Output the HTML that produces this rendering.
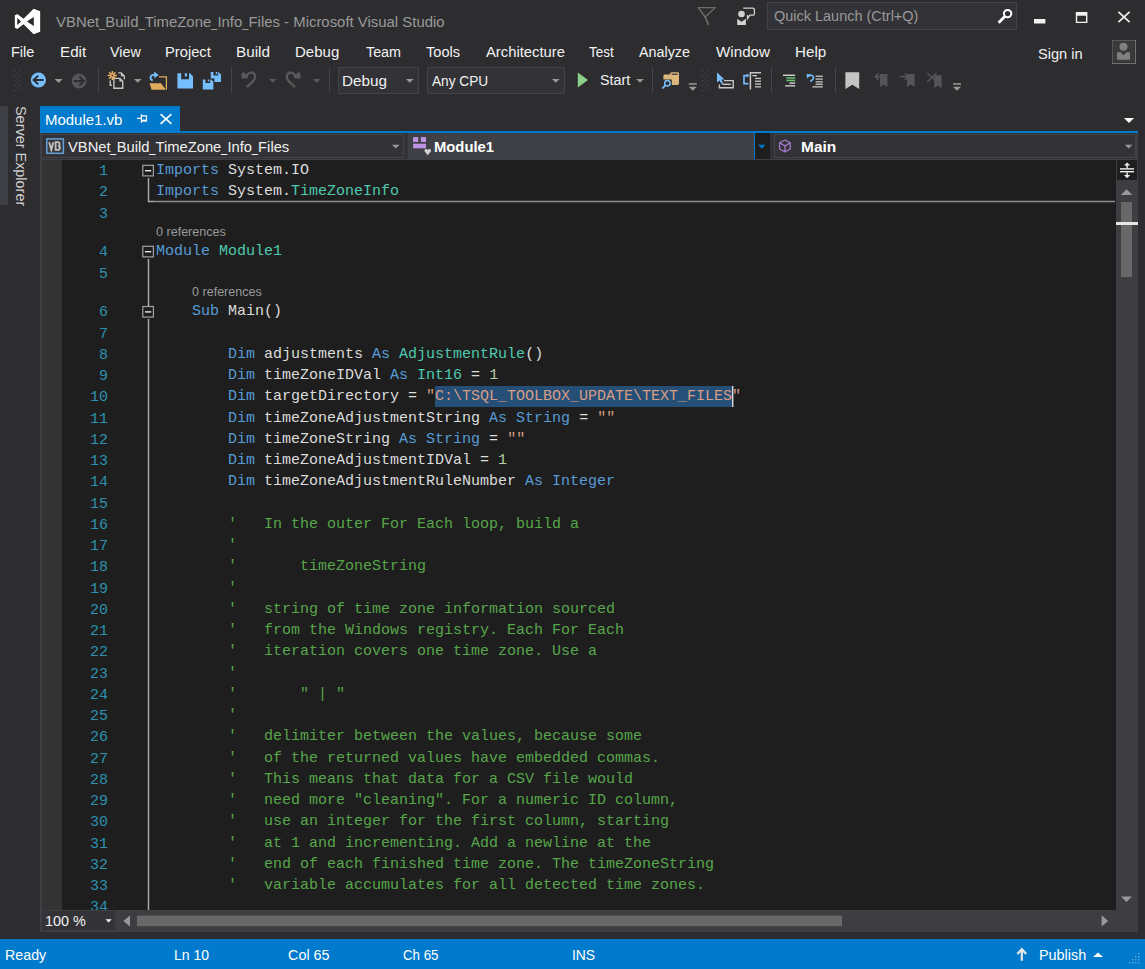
<!DOCTYPE html>
<html><head><meta charset="utf-8"><title>VBNet_Build_TimeZone_Info_Files - Microsoft Visual Studio</title>
<style>
html,body{margin:0;padding:0;background:#2d2d30;}
body{width:1145px;height:969px;position:relative;overflow:hidden;font-family:"Liberation Sans",sans-serif;}
.t{position:absolute;white-space:pre;line-height:20px;height:20px;transform-origin:0 50%;font-family:"Liberation Sans",sans-serif;}
.c{position:absolute;white-space:pre;line-height:20px;height:20px;font-family:"Liberation Mono",monospace;font-size:15px;color:#dcdcdc;left:156px;}
.n{position:absolute;white-space:pre;line-height:20px;height:20px;font-family:"Liberation Mono",monospace;font-size:15px;color:#2b91af;text-align:right;width:40px;left:68px;}
.b{position:absolute;}
.u{display:inline-block;width:0.415em;transform:scaleX(0.746);transform-origin:0 50%;}
svg{position:absolute;left:0;top:0;}
</style></head><body>
<!-- chrome boxes -->
<div class="b" style="left:0;top:106px;width:8px;height:99px;background:#3f3f46;"></div>
<div class="b" style="left:767px;top:2px;width:248px;height:26px;background:#333337;border:1px solid #434346;"></div>
<div class="b" style="left:338px;top:67px;width:79px;height:25px;background:#333337;border:1px solid #434346;"></div>
<div class="b" style="left:427px;top:67px;width:136px;height:25px;background:#333337;border:1px solid #434346;"></div>
<div class="b" style="left:1112px;top:40px;width:21.5px;height:21.5px;border:1px solid #747474;"></div>
<!-- document well -->
<div class="b" style="left:40px;top:106px;width:140px;height:26px;background:#007acc;"></div>
<div class="b" style="left:40px;top:131px;width:1098px;height:2px;background:#007acc;"></div>
<div class="b" style="left:40px;top:133px;width:1098px;height:799px;background:#3f3f46;"></div>
<div class="b" style="left:42px;top:133px;width:1094px;height:26px;background:#333337;"></div>
<div class="b" style="left:42px;top:134px;width:362px;height:24px;background:#333337;border:1px solid #434346;border-left:0;box-sizing:border-box;"></div>
<div class="b" style="left:408px;top:133px;width:346px;height:26px;background:#3f3f46;"></div>
<div class="b" style="left:754px;top:133px;width:16px;height:26px;background:#1e1e1e;border-left:1px solid #007acc;box-sizing:border-box;"></div>
<div class="b" style="left:774px;top:134px;width:362px;height:24px;background:#333337;border:1px solid #434346;box-sizing:border-box;"></div>
<div class="b" style="left:42px;top:160px;width:20px;height:750px;background:#333333;"></div>
<div class="b" style="left:62px;top:160px;width:1054px;height:750px;background:#1e1e1e;"></div>
<div class="b" style="left:1116px;top:160px;width:22px;height:750px;background:#3e3e42;"></div>
<div class="b" style="left:41px;top:910px;width:1097px;height:22px;background:#3e3e42;"></div>
<div class="b" style="left:42px;top:911px;width:73px;height:19px;background:#333337;border:0 solid #434346;"></div>
<div class="b" style="left:0;top:939px;width:1145px;height:30px;background:#007acc;"></div>
<div class="b" style="left:62px;top:160px;width:1054px;height:750px;overflow:hidden;">
<div class="b" style="left:-62px;top:-160px;width:1145px;height:969px;">
<div class="b" style="left:435px;top:386px;width:297px;height:21px;background:#264f78;"></div>
<div class="n" style="top:162px">1</div><div class="c" style="top:161px"><span style="color:#569cd6">Imports</span> System.IO</div>
<div class="n" style="top:183px">2</div><div class="c" style="top:182px"><span style="color:#569cd6">Imports</span> System.<span style="color:#4ec9b0">TimeZoneInfo</span></div>
<div class="n" style="top:205px">3</div>
<div class="n" style="top:243px">4</div><div class="c" style="top:242px"><span style="color:#569cd6">Module</span> <span style="color:#4ec9b0">Module1</span></div>
<div class="n" style="top:265px">5</div>
<div class="n" style="top:303px">6</div><div class="c" style="top:302px">    <span style="color:#569cd6">Sub</span> Main()</div>
<div class="n" style="top:325px">7</div>
<div class="n" style="top:346px">8</div><div class="c" style="top:345px">        <span style="color:#569cd6">Dim</span> adjustments <span style="color:#569cd6">As</span> <span style="color:#4ec9b0">AdjustmentRule</span>()</div>
<div class="n" style="top:367px">9</div><div class="c" style="top:366px">        <span style="color:#569cd6">Dim</span> timeZoneIDVal <span style="color:#569cd6">As</span> <span style="color:#4ec9b0">Int16</span> = <span style="color:#b5cea8">1</span></div>
<div class="n" style="top:388px">10</div><div class="c" style="top:387px">        <span style="color:#569cd6">Dim</span> targetDirectory = <span style="color:#d69d85">&quot;C:\TSQL_TOOLBOX_UPDATE\TEXT_FILES&quot;</span></div>
<div class="n" style="top:410px">11</div><div class="c" style="top:409px">        <span style="color:#569cd6">Dim</span> timeZoneAdjustmentString <span style="color:#569cd6">As</span> <span style="color:#569cd6">String</span> = <span style="color:#d69d85">&quot;&quot;</span></div>
<div class="n" style="top:431px">12</div><div class="c" style="top:430px">        <span style="color:#569cd6">Dim</span> timeZoneString <span style="color:#569cd6">As</span> <span style="color:#569cd6">String</span> = <span style="color:#d69d85">&quot;&quot;</span></div>
<div class="n" style="top:452px">13</div><div class="c" style="top:451px">        <span style="color:#569cd6">Dim</span> timeZoneAdjustmentIDVal = <span style="color:#b5cea8">1</span></div>
<div class="n" style="top:473px">14</div><div class="c" style="top:472px">        <span style="color:#569cd6">Dim</span> timeZoneAdjustmentRuleNumber <span style="color:#569cd6">As</span> <span style="color:#569cd6">Integer</span></div>
<div class="n" style="top:495px">15</div>
<div class="n" style="top:516px">16</div><div class="c" style="top:515px">        <span style="color:#57a64a">&#x27;   In the outer For Each loop, build a</span></div>
<div class="n" style="top:537px">17</div><div class="c" style="top:536px">        <span style="color:#57a64a">&#x27;</span></div>
<div class="n" style="top:558px">18</div><div class="c" style="top:557px">        <span style="color:#57a64a">&#x27;       timeZoneString</span></div>
<div class="n" style="top:580px">19</div><div class="c" style="top:579px">        <span style="color:#57a64a">&#x27;</span></div>
<div class="n" style="top:601px">20</div><div class="c" style="top:600px">        <span style="color:#57a64a">&#x27;   string of time zone information sourced</span></div>
<div class="n" style="top:622px">21</div><div class="c" style="top:621px">        <span style="color:#57a64a">&#x27;   from the Windows registry. Each For Each</span></div>
<div class="n" style="top:643px">22</div><div class="c" style="top:642px">        <span style="color:#57a64a">&#x27;   iteration covers one time zone. Use a</span></div>
<div class="n" style="top:665px">23</div><div class="c" style="top:664px">        <span style="color:#57a64a">&#x27;</span></div>
<div class="n" style="top:686px">24</div><div class="c" style="top:685px">        <span style="color:#57a64a">&#x27;       &quot; | &quot;</span></div>
<div class="n" style="top:707px">25</div><div class="c" style="top:706px">        <span style="color:#57a64a">&#x27;</span></div>
<div class="n" style="top:728px">26</div><div class="c" style="top:727px">        <span style="color:#57a64a">&#x27;   delimiter between the values, because some</span></div>
<div class="n" style="top:750px">27</div><div class="c" style="top:749px">        <span style="color:#57a64a">&#x27;   of the returned values have embedded commas.</span></div>
<div class="n" style="top:771px">28</div><div class="c" style="top:770px">        <span style="color:#57a64a">&#x27;   This means that data for a CSV file would</span></div>
<div class="n" style="top:792px">29</div><div class="c" style="top:791px">        <span style="color:#57a64a">&#x27;   need more &quot;cleaning&quot;. For a numeric ID column,</span></div>
<div class="n" style="top:813px">30</div><div class="c" style="top:812px">        <span style="color:#57a64a">&#x27;   use an integer for the first column, starting</span></div>
<div class="n" style="top:835px">31</div><div class="c" style="top:834px">        <span style="color:#57a64a">&#x27;   at 1 and incrementing. Add a newline at the</span></div>
<div class="n" style="top:856px">32</div><div class="c" style="top:855px">        <span style="color:#57a64a">&#x27;   end of each finished time zone. The timeZoneString</span></div>
<div class="n" style="top:877px">33</div><div class="c" style="top:876px">        <span style="color:#57a64a">&#x27;   variable accumulates for all detected time zones.</span></div>
<div class="n" style="top:898px">34</div>
</div></div>
<div class="t" style="left:55.56px;top:11.70px;font-size:15.3px;color:#999999;font-weight:400;transform:scaleX(0.9749)">VBNet<span class="u">_</span>Build<span class="u">_</span>TimeZone<span class="u">_</span>Info<span class="u">_</span>Files - Microsoft Visual Studio</div>
<div class="t" style="left:774.06px;top:6.40px;font-size:15px;color:#999999;font-weight:400;transform:scaleX(0.9650)">Quick Launch (Ctrl+Q)</div>
<div class="t" style="left:11.32px;top:41.66px;font-size:15.4px;color:#f1f1f1;font-weight:400;transform:scaleX(0.9440)">File</div>
<div class="t" style="left:59.88px;top:41.66px;font-size:15.4px;color:#f1f1f1;font-weight:400;transform:scaleX(0.9882)">Edit</div>
<div class="t" style="left:110.22px;top:41.66px;font-size:15.4px;color:#f1f1f1;font-weight:400;transform:scaleX(0.9311)">View</div>
<div class="t" style="left:165.32px;top:41.66px;font-size:15.4px;color:#f1f1f1;font-weight:400;transform:scaleX(0.9562)">Project</div>
<div class="t" style="left:235.88px;top:41.66px;font-size:15.4px;color:#f1f1f1;font-weight:400;transform:scaleX(0.9941)">Build</div>
<div class="t" style="left:295.10px;top:41.66px;font-size:15.4px;color:#f1f1f1;font-weight:400;transform:scaleX(0.9752)">Debug</div>
<div class="t" style="left:365.78px;top:41.66px;font-size:15.4px;color:#f1f1f1;font-weight:400;transform:scaleX(0.9298)">Team</div>
<div class="t" style="left:426.00px;top:41.66px;font-size:15.4px;color:#f1f1f1;font-weight:400;transform:scaleX(0.9461)">Tools</div>
<div class="t" style="left:485.78px;top:41.66px;font-size:15.4px;color:#f1f1f1;font-weight:400;transform:scaleX(0.9619)">Architecture</div>
<div class="t" style="left:589.22px;top:41.66px;font-size:15.4px;color:#f1f1f1;font-weight:400;transform:scaleX(0.8720)">Test</div>
<div class="t" style="left:639.00px;top:41.66px;font-size:15.4px;color:#f1f1f1;font-weight:400;transform:scaleX(0.9312)">Analyze</div>
<div class="t" style="left:715.78px;top:41.66px;font-size:15.4px;color:#f1f1f1;font-weight:400;transform:scaleX(0.9863)">Window</div>
<div class="t" style="left:795.10px;top:41.66px;font-size:15.4px;color:#f1f1f1;font-weight:400;transform:scaleX(0.9872)">Help</div>
<div class="t" style="left:1038.22px;top:43.66px;font-size:15.4px;color:#f1f1f1;font-weight:400;transform:scaleX(0.9477)">Sign in</div>
<div class="t" style="left:342.32px;top:70.66px;font-size:15.4px;color:#f1f1f1;font-weight:400;transform:scaleX(0.9926)">Debug</div>
<div class="t" style="left:432.00px;top:70.66px;font-size:15.4px;color:#f1f1f1;font-weight:400;transform:scaleX(0.8880)">Any CPU</div>
<div class="t" style="left:599.78px;top:70.46px;font-size:15.4px;color:#f1f1f1;font-weight:400;transform:scaleX(0.9291)">Start</div>
<div class="t" style="left:44.88px;top:109.80px;font-size:15px;color:#ffffff;font-weight:400;transform:scaleX(0.9980)">Module1.vb</div>
<div class="t" style="left:67.78px;top:136.66px;font-size:15.4px;color:#f1f1f1;font-weight:400;transform:scaleX(0.9569)">VBNet<span class="u">_</span>Build<span class="u">_</span>TimeZone<span class="u">_</span>Info<span class="u">_</span>Files</div>
<div class="t" style="left:434.22px;top:136.66px;font-size:15.4px;color:#ffffff;font-weight:700;transform:scaleX(0.9612)">Module1</div>
<div class="t" style="left:800.78px;top:136.66px;font-size:15.4px;color:#ffffff;font-weight:700;transform:scaleX(1.0043)">Main</div>
<div class="t" style="left:156.22px;top:221.90px;font-size:13px;color:#999999;font-weight:400;transform:scaleX(0.9659)">0 references</div>
<div class="t" style="left:192.22px;top:281.90px;font-size:13px;color:#999999;font-weight:400;transform:scaleX(0.9659)">0 references</div>
<div class="t" style="left:45.00px;top:910.68px;font-size:14.2px;color:#f1f1f1;font-weight:400;transform:scaleX(1.0142)">100 %</div>
<div class="t" style="left:4.88px;top:944.80px;font-size:15px;color:#ffffff;font-weight:400;transform:scaleX(0.9505)">Ready</div>
<div class="t" style="left:174.10px;top:944.80px;font-size:15px;color:#ffffff;font-weight:400;transform:scaleX(0.9330)">Ln 10</div>
<div class="t" style="left:288.22px;top:944.80px;font-size:15px;color:#ffffff;font-weight:400;transform:scaleX(0.9595)">Col 65</div>
<div class="t" style="left:402.78px;top:944.80px;font-size:15px;color:#ffffff;font-weight:400;transform:scaleX(0.8844)">Ch 65</div>
<div class="t" style="left:571.66px;top:944.80px;font-size:15px;color:#ffffff;font-weight:400;transform:scaleX(0.9244)">INS</div>
<div class="t" style="left:1038.88px;top:944.80px;font-size:15px;color:#ffffff;font-weight:400;transform:scaleX(0.9600)">Publish</div>
<div class="b" style="left:21px;top:106px;width:0;height:0;"><div style="position:absolute;left:0;top:0;white-space:pre;font-size:15px;line-height:20px;color:#d0d0d0;transform-origin:0 0;transform:rotate(90deg) translate(0,-10px) scaleX(0.962);">Server Explorer</div></div>
<svg width="1145" height="969" viewBox="0 0 1145 969">
<defs>
<pattern id="grip" x="14" y="70" width="5" height="5" patternUnits="userSpaceOnUse"><rect x="0" y="0" width="1.2" height="1.2" fill="#4b4b50"/><rect x="2.4" y="2.5" width="1.2" height="1.2" fill="#434347"/></pattern>
<pattern id="grip2" x="702" y="70" width="5" height="5" patternUnits="userSpaceOnUse"><rect x="0" y="0" width="1.2" height="1.2" fill="#4b4b50"/><rect x="2.4" y="2.5" width="1.2" height="1.2" fill="#434347"/></pattern>
</defs>
<!-- VS logo -->
<path fill="#ffffff" fill-rule="evenodd" stroke="#222224" stroke-width="1.2" paint-order="stroke" d="M14.8 15.2L17.3 14L23.5 18.7L33.6 8.8L40.2 11.3V31.7L33.6 34.2L23.5 24.3L17.3 29L14.8 27.8ZM17.3 18.1V24.9L21 21.4ZM33.8 16.9L27 21.4L33.8 26.1Z"/>
<!-- filter flag -->
<path d="M698.3 7.6H715.3L705.3 17Z" fill="none" stroke="#6d6d6d" stroke-width="1.3" stroke-linejoin="round"/>
<path d="M705 16.5L708.6 24.9" stroke="#6d6d6d" stroke-width="1.8" fill="none"/>
<!-- feedback -->
<circle cx="741.5" cy="14" r="3.3" fill="#d0d0d0"/>
<path d="M737.2 18.8L741.5 21.8L745.9 18.8V24.9H737.2Z" fill="#d0d0d0"/>
<path d="M743.2 8.1H752.8a1.6 1.6 0 0 1 1.6 1.6V13.6a1.6 1.6 0 0 1 -1.6 1.6H749.8L747.5 18.6V15" fill="none" stroke="#d0d0d0" stroke-width="1.3"/>
<!-- search -->
<circle cx="1007.6" cy="13.6" r="3.7" fill="none" stroke="#ffffff" stroke-width="2"/>
<path d="M1004.8 16.6L998.6 22.8" stroke="#ffffff" stroke-width="2.8" fill="none"/>
<!-- window buttons -->
<rect x="1034" y="19" width="11.4" height="4.5" fill="#f1f1f1"/>
<path d="M1075.8 12H1087.4V23H1075.8ZM1077.2 15.8V21.7H1086V15.8Z" fill="#f1f1f1" fill-rule="evenodd"/>
<path d="M1118.4 11.9L1129.6 22.1M1129.6 11.9L1118.4 22.1" stroke="#f1f1f1" stroke-width="1.7" fill="none"/>
<!-- avatar -->
<rect x="1112.5" y="40.5" width="22" height="22" fill="#3a3a3d"/>
<circle cx="1123.5" cy="46.7" r="4" fill="#808080"/>
<path d="M1117 52.3H1120.6L1123.5 55.2L1126.4 52.3H1130V59.7H1117Z" fill="#808080"/>

<!-- toolbar grips -->
<rect x="14" y="70" width="6.3" height="21.3" fill="url(#grip)"/>
<rect x="702" y="70" width="6.3" height="21.3" fill="url(#grip2)"/>
<!-- separators -->
<g fill="#46464a">
<rect x="98" y="68" width="1" height="24"/><rect x="231" y="68" width="1" height="24"/><rect x="329" y="68" width="1" height="24"/>
<rect x="652" y="68" width="1" height="24"/><rect x="771" y="68" width="1" height="24"/><rect x="835" y="68" width="1" height="24"/>
</g>
<!-- back / forward -->
<circle cx="38.4" cy="80" r="7.6" fill="#75beff"/>
<path d="M33.6 80H43.6M38.2 75.6L33.6 80L38.2 84.4" stroke="#2d2d30" stroke-width="2" fill="none"/>
<circle cx="79.1" cy="81" r="7.4" fill="#555558"/>
<path d="M74 81H84M79.4 76.6L84 81L79.4 85.4" stroke="#2d2d30" stroke-width="2" fill="none"/>
<!-- dropdown arrows -->
<g fill="#999999">
<path d="M54.6 79H62.6L58.6 83Z"/>
<path d="M134 79H141.6L137.8 82.8Z"/>
<path d="M406 79H413.6L409.8 82.8Z"/>
<path d="M552 79H559.6L555.8 82.8Z"/>
<path d="M636.2 79H643.8L640 82.8Z"/>
<path d="M392 144.8H399.6L395.8 148.6Z"/>
<path d="M1124.8 144.8H1132.4L1128.6 148.6Z"/>
</g>
<g fill="#5a5a5c">
<path d="M269 79H276.6L272.8 82.8Z"/>
<path d="M313 79H320.6L316.8 82.8Z"/>
</g>
<path d="M758 144.8H765.6L761.8 148.6Z" fill="#007acc"/>
<!-- new item -->
<g fill="none" stroke="#c4c4c4" stroke-width="1.4">
<path d="M118.2 72.9H121.2L124.3 76V79.2"/>
<path d="M110.3 80.6V85.3H111.8"/>
<path d="M113.9 78.4H119.9L122.7 81.2V88.2H113.9Z" fill="#2d2d30"/>
</g>
<path d="M120.9 72.6V76.2H124.5Z" fill="#c4c4c4"/><path d="M119.4 78.2V81.6H122.9Z" fill="#c4c4c4"/>
<g stroke="#f0b765" stroke-width="1.4" fill="none">
<path d="M112.3 70.9V80.1M107.7 75.5H116.9M109.1 72.3L115.5 78.7M115.5 72.3L109.1 78.7"/>
</g>
<circle cx="112.3" cy="75.5" r="0.9" fill="#2d2d30"/>
<!-- open folder -->
<path d="M159 76.8H166.4V89.4" fill="none" stroke="#e0ac5c" stroke-width="1.3"/>
<path d="M149.6 83.2H161L165.9 89.8H151.6Z" fill="#e0ac5c"/>
<path d="M152.6 80.6C149 78.6 150.2 74.4 155 74.8" fill="none" stroke="#75beff" stroke-width="1.8"/>
<path d="M154.2 71.4L158.8 74.9L154.2 78.2Z" fill="#75beff"/>
<!-- save -->
<path d="M177.4 73.2H190L193 76.2V88.4H177.4ZM181.2 73.2V79.2H189V73.2ZM184.8 73.2H187V76.4H184.8Z" fill="#75beff" fill-rule="evenodd"/>
<!-- save all -->
<path d="M210.8 72H218.6L221 74.4V82H210.8ZM213.4 72V75.6H218.2V72ZM215.8 72H217.2V74.2H215.8Z" fill="#75beff" fill-rule="evenodd"/>
<path d="M201.8 78.4H214.4V90.4H201.8Z" fill="#2d2d30"/>
<path d="M202.8 79.4H211L213.4 81.8V89.4H202.8ZM205.4 79.4V83H210.2V79.4ZM207.8 79.4H209.2V81.6H207.8Z" fill="#75beff" fill-rule="evenodd"/>
<!-- undo / redo (disabled) -->
<g fill="none" stroke="#58585a">
<path d="M246.4 76C248 72.8 251.4 71.8 253.4 73.2C255.8 75 255.6 78.6 253.4 80.8L246.8 87.2" stroke-width="2.4"/>
<path d="M243.1 71.8L241.4 74V78.6H246.8L248.6 76.4Z" fill="#58585a" stroke="none"/>
</g>
<g fill="none" stroke="#58585a" transform="translate(541.9 0) scale(-1 1)">
<path d="M246.4 76C248 72.8 251.4 71.8 253.4 73.2C255.8 75 255.6 78.6 253.4 80.8L246.8 87.2" stroke-width="2.4"/>
<path d="M243.1 71.8L241.4 74V78.6H246.8L248.6 76.4Z" fill="#58585a" stroke="none"/>
</g>
<!-- start -->
<path d="M577.8 72.6V87.4L588 80Z" fill="#8dd28a"/>
<!-- find in files -->
<path d="M663.4 76C663.4 75.2 664 74.6 664.8 74.6H669.4L671 72.2H677.6C678.4 72.2 679 72.8 679 73.6V83.6C679 84.4 678.4 85 677.6 85H671.8V79.4H663.4Z" fill="#dcb67a"/>
<rect x="671.6" y="73.6" width="6" height="1.3" fill="#3a3a3c"/>
<circle cx="667.4" cy="83.2" r="2.7" fill="#2d2d30" stroke="#75beff" stroke-width="1.5"/>
<path d="M665.5 85.2L662.4 88.5" stroke="#75beff" stroke-width="1.8" fill="none"/>
<!-- overflow buttons -->
<g fill="#999999">
<rect x="688.8" y="83.2" width="8" height="1.5"/><path d="M688.8 86.8H696.8L692.8 90.8Z"/>
<rect x="953" y="83.2" width="8" height="1.5"/><path d="M953 86.8H961L957 90.8Z"/>
</g>
<!-- icon A: pointer + box -->
<path d="M717 72.4V82.6L719.6 80.4L721.6 84L723.2 83.2L721.4 79.6H724.6Z" fill="#75beff"/>
<path d="M724 80.6H733.2V87.8H719.4V84.6" fill="none" stroke="#c8c8c8" stroke-width="1.4"/>
<rect x="722.4" y="83.6" width="8.4" height="1.4" fill="#c8c8c8"/>
<!-- icon B -->
<path d="M748.4 75.6H744V83.6H748.4" fill="none" stroke="#75beff" stroke-width="1.6"/>
<path d="M746.6 73.6L749.4 75.6L746.6 77.6Z" fill="#75beff"/>
<path d="M750.4 89.6V72.8H761" fill="none" stroke="#c8c8c8" stroke-width="1.5"/>
<g fill="#c8c8c8"><rect x="752.4" y="75" width="4.6" height="1.3"/><rect x="755" y="77.8" width="6" height="1.3"/><rect x="755" y="80.6" width="6" height="1.3"/><rect x="755" y="83.4" width="6" height="1.3"/><rect x="755" y="86.2" width="6" height="1.3"/></g>
<!-- icon C -->
<g fill="#e0e0e0"><rect x="783" y="74.6" width="12.2" height="1.3"/><rect x="789.4" y="82.4" width="5.8" height="1.3"/><rect x="785.2" y="85.2" width="10" height="1.3"/></g>
<g fill="#6cc56c"><rect x="786.4" y="77.2" width="8.8" height="1.5"/><rect x="786.4" y="79.7" width="8.8" height="1.5"/></g>
<!-- icon D -->
<path d="M808.4 76.4C811.6 73.6 815 76.6 812.8 79.2L810.4 81.6" fill="none" stroke="#75beff" stroke-width="1.6"/>
<path d="M806.6 74L811 74.6L807 78.6Z" fill="#75beff"/>
<g fill="#c8c8c8"><rect x="815.6" y="75.6" width="7.2" height="1.3"/><rect x="815.6" y="78.4" width="7.2" height="1.3"/><rect x="815.6" y="81.2" width="7.2" height="1.3"/><rect x="815.6" y="83.6" width="7.2" height="1.3"/><rect x="812.4" y="86.2" width="10.4" height="1.3"/></g>
<!-- bookmarks -->
<path d="M845.4 72.2H859.2V89L852.3 84.8L845.4 89Z" fill="#c5c5c5"/>
<g fill="#555558">
<path d="M880 74H887.4V87L883.7 84.4L880 87Z"/>
<path d="M907 74H914.6V87L910.8 84.4L907 87Z"/>
<path d="M934.2 75.2H941.6V88.2L937.9 85.6L934.2 88.2Z"/>
</g>
<g fill="none" stroke="#555558" stroke-width="1.5">
<path d="M883.6 76.4H875.4M878.6 73.2L875.4 76.4L878.6 79.6"/>
<path d="M899.6 76.4H908M904.8 73.2L908 76.4L904.8 79.6"/>
<path d="M927.4 73L936.4 81.6M936.4 73L927.4 81.6"/>
</g>

<!-- tab glyphs -->
<path d="M137 118.4H141M141.4 114.2V122.8M141.4 115.8H146.5V120" fill="none" stroke="#ffffff" stroke-width="1.2"/>
<rect x="141.4" y="119.6" width="5.7" height="2.1" fill="#ffffff"/>
<path d="M160.6 114.2L171.4 123.8M171.4 114.2L160.6 123.8" stroke="#ffffff" stroke-width="1.6" fill="none"/>
<path d="M1124 118H1134L1129 123Z" fill="#ffffff"/>

<!-- VB icon -->
<rect x="46.8" y="138.9" width="16.6" height="14.4" fill="#3a3a3c" stroke="#64a0dc" stroke-width="1.5"/>
<path d="M49.2 142.2L51.3 149.8L53.4 142.2M55.6 142.2V149.8H58C60.4 149.8 60.4 146.2 58.2 146C60.2 145.8 60 142.2 57.8 142.2Z" fill="none" stroke="#c4c4c4" stroke-width="1.8"/>
<!-- module icon -->
<g fill="#c094e4"><rect x="413.1" y="137.1" width="5.1" height="4.9"/><rect x="420.8" y="137.1" width="5.2" height="4.9"/><rect x="413.1" y="143.7" width="12.9" height="4.6"/></g>
<path d="M427.75 155.2L424.7 151.6C423.6 149.4 426.6 147.8 427.75 150.2C428.9 147.8 431.9 149.4 430.8 151.6Z" fill="#d4d4d4"/>
<!-- method cube icon -->
<path d="M785 140L790.2 142.8V149L785 151.9L779.6 149V142.8ZM780 143L785 145.8L790 143M785 145.8V151.6" fill="none" stroke="#a077c8" stroke-width="1.35" stroke-linejoin="round"/>

<!-- outlining -->
<g fill="none" stroke="#a8a8a8" stroke-width="1.5">
<path d="M148.5 178V201.6H154"/>
<path d="M148.5 259V306M148.5 319V910"/>
<path d="M154 201.6H1115" stroke="#8c8c8c" stroke-width="1.5"/>
</g>
<g fill="#1e1e1e" stroke="#a0a0a0" stroke-width="1.2">
<rect x="142.8" y="165.3" width="10.6" height="10.6"/>
<rect x="142.8" y="246.3" width="10.6" height="10.6"/>
<rect x="142.8" y="306.5" width="10.6" height="10.6"/>
</g>
<g fill="#e8e8e8"><rect x="145" y="170" width="6.2" height="1.4"/><rect x="145" y="251" width="6.2" height="1.4"/><rect x="145" y="311.2" width="6.2" height="1.4"/></g>
<!-- caret -->
<rect x="732" y="386" width="1.4" height="21" fill="#dcdcdc"/>

<!-- vertical scrollbar -->
<rect x="1117" y="160" width="20" height="20" fill="#1e1e1e"/>
<g fill="#f1f1f1">
<rect x="1120" y="168.2" width="14" height="1.4"/><rect x="1120" y="171" width="14" height="1.4"/>
<rect x="1126.4" y="164" width="1.4" height="4.2"/><rect x="1126.4" y="172.4" width="1.4" height="4.2"/>
<path d="M1124 165.6L1127.1 162.4L1130.2 165.6Z"/><path d="M1124 175L1127.1 178.2L1130.2 175Z"/>
</g>
<path d="M1120.8 195H1132.4L1126.6 189.2Z" fill="#999999"/>
<rect x="1121" y="202" width="11" height="75" fill="#686868"/>
<rect x="1116" y="222" width="22" height="3" fill="#e6e6e6"/>
<path d="M1121 896.4H1132L1126.5 902Z" fill="#999999"/>
<!-- horizontal scrollbar -->
<path d="M130 915.6V926.4L123.4 921Z" fill="#999999"/>
<rect x="137" y="915.6" width="705" height="10.6" fill="#686868"/>
<path d="M1101.6 915.2V926.6L1108.2 921Z" fill="#999999"/>
<path d="M105.6 919.2H111.6L108.6 922.6Z" fill="#ffffff"/>

<!-- status bar -->
<path d="M1021.8 960.8V949.4M1017.4 954L1021.8 949.2L1026.2 954" fill="none" stroke="#e6e6e6" stroke-width="2.2"/>
<path d="M1093 957H1103L1098 952.4Z" fill="#ffffff"/>
<g fill="#5fa8dd">
<rect x="1138" y="953" width="1.4" height="1.4"/>
<rect x="1135" y="956" width="1.4" height="1.4"/><rect x="1138" y="956" width="1.4" height="1.4"/>
<rect x="1132" y="959" width="1.4" height="1.4"/><rect x="1135" y="959" width="1.4" height="1.4"/><rect x="1138" y="959" width="1.4" height="1.4"/>
<rect x="1129" y="962" width="1.4" height="1.4"/><rect x="1132" y="962" width="1.4" height="1.4"/><rect x="1135" y="962" width="1.4" height="1.4"/><rect x="1138" y="962" width="1.4" height="1.4"/>
</g>
</svg>
</body></html>
